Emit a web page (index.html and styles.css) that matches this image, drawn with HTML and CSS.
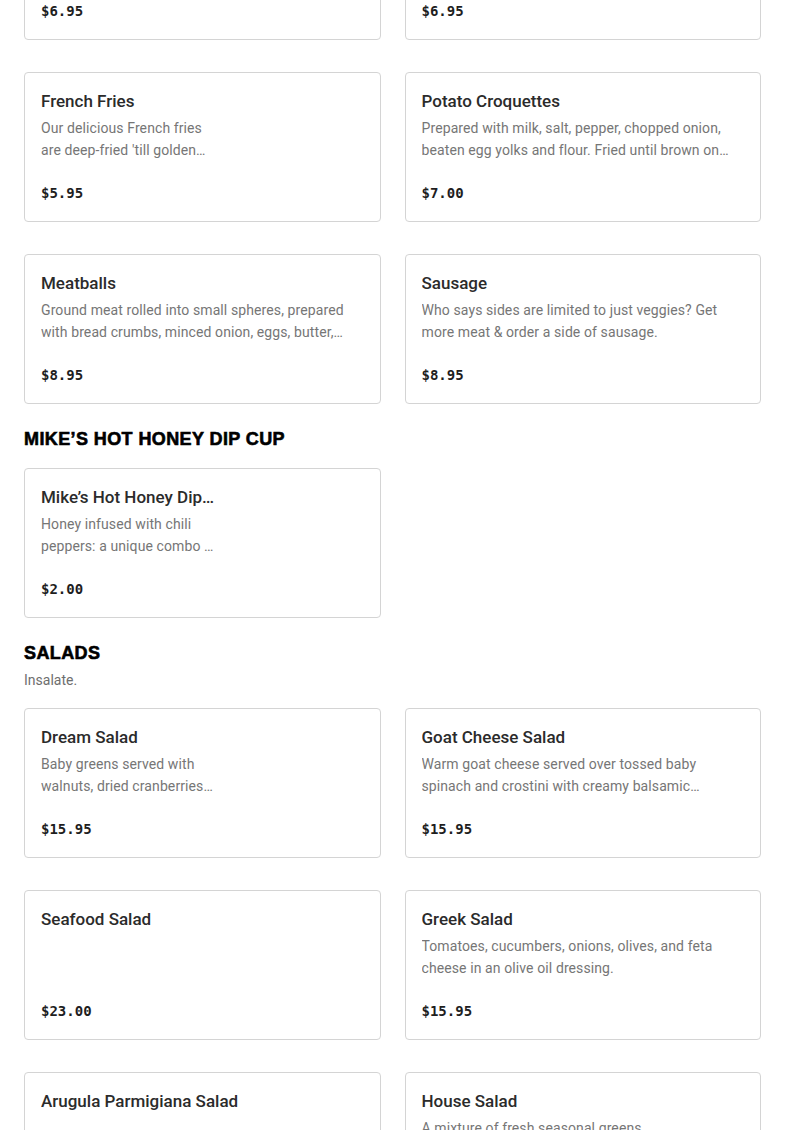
FILE: index.html
```html
<!DOCTYPE html>
<html lang="en">
<head>
<meta charset="utf-8">
<title>Menu</title>
<link rel="stylesheet" href="styles.css">
</head>
<body>
<main class="menu">
  <section class="section section-first">
    <div class="grid">
      <article class="card">
        <div class="card-body">
          <h3 class="card-title">Sautéed Spinach</h3>
          <p class="card-desc">Fresh spinach sautéed with garlic and extra virgin olive oil.</p>
          <div class="card-price">$6.95</div>
        </div>
      </article>
      <article class="card">
        <div class="card-body">
          <h3 class="card-title">Sautéed Broccoli</h3>
          <p class="card-desc">Fresh broccoli sautéed with garlic and extra virgin olive oil.</p>
          <div class="card-price">$6.95</div>
        </div>
      </article>
      <article class="card">
        <div class="card-body narrow">
          <h3 class="card-title">French Fries</h3>
          <p class="card-desc">Our delicious French fries are deep-fried 'till golden…</p>
          <div class="card-price">$5.95</div>
        </div>
      </article>
      <article class="card">
        <div class="card-body">
          <h3 class="card-title">Potato Croquettes</h3>
          <p class="card-desc">Prepared with milk, salt, pepper, chopped onion, beaten egg yolks and flour. Fried until brown on…</p>
          <div class="card-price">$7.00</div>
        </div>
      </article>
      <article class="card">
        <div class="card-body">
          <h3 class="card-title">Meatballs</h3>
          <p class="card-desc">Ground meat rolled into small spheres, prepared with bread crumbs, minced onion, eggs, butter,…</p>
          <div class="card-price">$8.95</div>
        </div>
      </article>
      <article class="card">
        <div class="card-body">
          <h3 class="card-title">Sausage</h3>
          <p class="card-desc">Who says sides are limited to just veggies? Get more meat &amp; order a side of sausage.</p>
          <div class="card-price">$8.95</div>
        </div>
      </article>
    </div>
  </section>

  <section class="section">
    <h2 class="section-title">MIKE’S HOT HONEY DIP CUP</h2>
    <div class="grid">
      <article class="card">
        <div class="card-body narrow">
          <h3 class="card-title">Mike’s Hot Honey Dip…</h3>
          <p class="card-desc">Honey infused with chili peppers: a unique combo …</p>
          <div class="card-price">$2.00</div>
        </div>
      </article>
    </div>
  </section>

  <section class="section">
    <h2 class="section-title">SALADS</h2>
    <p class="section-desc">Insalate.</p>
    <div class="grid">
      <article class="card">
        <div class="card-body narrow">
          <h3 class="card-title">Dream Salad</h3>
          <p class="card-desc">Baby greens served with walnuts, dried cranberries…</p>
          <div class="card-price">$15.95</div>
        </div>
      </article>
      <article class="card">
        <div class="card-body">
          <h3 class="card-title">Goat Cheese Salad</h3>
          <p class="card-desc">Warm goat cheese served over tossed baby spinach and crostini with creamy balsamic…</p>
          <div class="card-price">$15.95</div>
        </div>
      </article>
      <article class="card">
        <div class="card-body">
          <h3 class="card-title">Seafood Salad</h3>
          <p class="card-desc"></p>
          <div class="card-price">$23.00</div>
        </div>
      </article>
      <article class="card">
        <div class="card-body">
          <h3 class="card-title">Greek Salad</h3>
          <p class="card-desc">Tomatoes, cucumbers, onions, olives, and feta cheese in an olive oil dressing.</p>
          <div class="card-price">$15.95</div>
        </div>
      </article>
      <article class="card">
        <div class="card-body">
          <h3 class="card-title">Arugula Parmigiana Salad</h3>
          <p class="card-desc"></p>
          <div class="card-price">$14.95</div>
        </div>
      </article>
      <article class="card">
        <div class="card-body">
          <h3 class="card-title">House Salad</h3>
          <p class="card-desc">A mixture of fresh seasonal greens.</p>
          <div class="card-price">$11.95</div>
        </div>
      </article>
    </div>
  </section>
</main>
</body>
</html>
```

FILE: styles.css
```css
* {
  box-sizing: border-box;
}

html, body {
  margin: 0;
  padding: 0;
  background: #ffffff;
}

body {
  font-family: Roboto, "Noto Sans", "Liberation Sans", sans-serif;
  color: #2b2b2b;
  overflow: hidden;
}

.menu {
  padding: 0 24px;
  margin-top: -110px;
}

.section {
  padding-top: 23px;
}

.section-first {
  padding-top: 0;
}

.section-title {
  margin: 0;
  font-family: "Liberation Sans", Arial, sans-serif;
  font-weight: 900;
  font-size: 18px;
  line-height: 24px;
  letter-spacing: 0.4px;
  color: #000;
  -webkit-text-stroke: 0.6px #000;
}

.section-desc {
  margin: 4px 0 0;
  font-size: 14px;
  line-height: 22px;
  color: #6e6e6e;
}

.section-title + .grid,
.section-desc + .grid {
  margin-top: 17px;
}

.grid {
  display: grid;
  grid-template-columns: 1fr 1fr;
  column-gap: 24px;
  row-gap: 32px;
}

.card {
  border: 1px solid #d4d4d4;
  border-radius: 4px;
  background: #fff;
  height: 150px;
  overflow: hidden;
}

.card-body {
  padding: 16px 16px 17px;
}

.card-body.narrow {
  width: 214px;
}

.card-title {
  margin: 0;
  font-size: 17px;
  font-weight: 500;
  line-height: 24px;
  color: #2b2b2b;
  white-space: nowrap;
  overflow: hidden;
  text-overflow: ellipsis;
}

.card-desc {
  margin: 4px 0 0;
  height: 44px;
  font-size: 14px;
  line-height: 22px;
  letter-spacing: 0.1px;
  color: #767676;
  display: -webkit-box;
  -webkit-line-clamp: 2;
  -webkit-box-orient: vertical;
  overflow: hidden;
}

.card-price {
  margin-top: 21px;
  font-family: "DejaVu Sans Mono", "Liberation Mono", monospace;
  font-weight: 700;
  font-size: 14px;
  line-height: 22px;
  color: #1e1e1e;
}
```
